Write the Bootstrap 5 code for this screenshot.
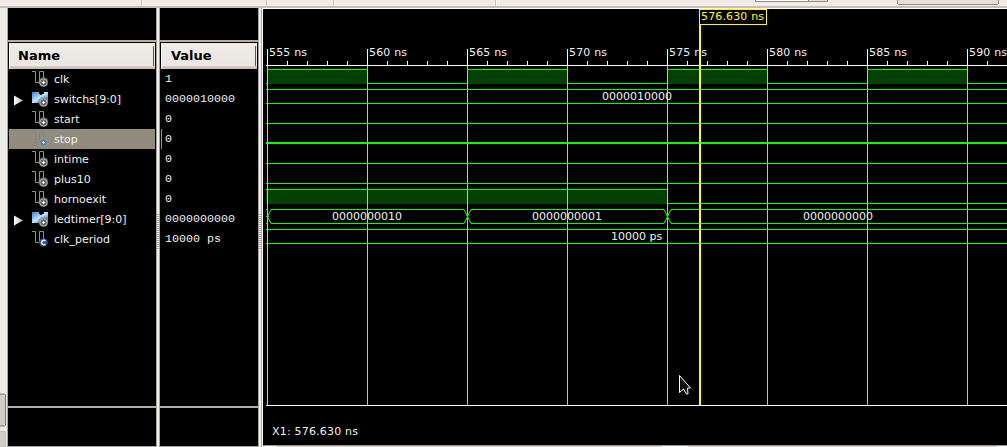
<!DOCTYPE html>
<html lang="en">
<head>
<meta charset="utf-8">
<title>Waveform viewer</title>
<link href="https://cdn.jsdelivr.net/npm/bootstrap@5.3.0/dist/css/bootstrap.min.css" rel="stylesheet">
<style>
body{width:1007px;height:447px;overflow:hidden;background:#efebe6;font:11px/20px "DejaVu Sans",sans-serif;color:#f0f0f0}
.toolbar-strip{height:8px;border-bottom:2px solid #c4bfb8;flex:none}
.left-edge{width:7px}
.pane{background:#000;border:1px solid #a8a49e;border-top:0;height:439px}
.pane-top{height:34px;border-bottom:2px solid #b3afa8}
.pane-head{height:26px;margin:1px 1px 0;background:linear-gradient(#efebe6 0,#eae6e1 88%,#c9c0b8 92%,#c9c0b8 100%);color:#000;font:bold 13px/25px "DejaVu Sans",sans-serif;padding-left:9px;border-left:1px solid #fff}
.names .pane-head{padding-left:8px}
.pane-head:after{content:"";width:1px;height:20px;background:#555;margin:3px 1px 0 auto}
.sig{height:20px;margin:0 1px;white-space:pre;line-height:22px}
.sig-arrow{width:23px;height:20px;flex:none}
.sig-icon{width:16px;height:16px;margin:2px 6px 0 0;flex:none;fill:none}
.sig-on{background:#918c7d}
.sig-on .sig-icon{opacity:.75}
.sig-list{height:337px}
.pane-foot{border-top:2px solid #b3afa8;height:39px}
.vals .sig{font:11.67px/21px "Liberation Mono",monospace;padding-left:4px}
.vals .sig-on{background:linear-gradient(90deg,#918c7d 1px,transparent 1px)}
.splitter{width:2px;background:#f3f0ec}
.grip{height:36px;margin-top:206px;background:repeating-linear-gradient(#aaa69f 0 1px,#fff 1px 2px)}
</style>
</head>
<body class="d-flex flex-column">
<div class="toolbar-strip"><svg class="d-block" width="1007" height="6" shape-rendering="crispEdges"><path d="M141.5 0V6M266.5 0V6M333.5 0V6M495.5 0V6" stroke="#c4bfb8"/><path d="M142.5 0V6M267.5 0V6M334.5 0V6M496.5 0V6" stroke="#fff"/><path d="M755.500 0V1.500H808.500V0" fill="#fff" stroke="#8e8a84"/><path d="M808.500 0V1.500H827.500V0" fill="#e5dfd9" stroke="#8e8a84"/><path d="M897.500 0V3.500L898.500 4.500H997.500L998.500 3.500V0" fill="#e5dfd9" stroke="#8e8a84"/></svg></div>
<main class="d-flex">
<div class="left-edge"><svg class="d-block" width="7" height="439"><path d="M0 386H4.500L5.500 387V417L4.500 418H0" fill="#d2cdc7" stroke="#77736e"/><path d="M0 423.500H5.500V439H0" fill="#d2cdc7" stroke="#c0bbb5"/></svg></div>
<section class="pane names" style="width:150px">
<div class="pane-top"></div>
<div class="pane-head d-flex">Name</div>
<div class="sig-list">
<div class="sig d-flex"><span class="sig-arrow"></span><svg class="sig-icon"><use href="#bit"/></svg>clk</div>
<div class="sig d-flex"><svg class="sig-arrow"><use href="#tri"/></svg><svg class="sig-icon"><use href="#bus"/></svg>switchs[9:0]</div>
<div class="sig d-flex"><span class="sig-arrow"></span><svg class="sig-icon"><use href="#bit"/></svg>start</div>
<div class="sig sig-on d-flex"><span class="sig-arrow"></span><svg class="sig-icon"><use href="#bitsel"/></svg>stop</div>
<div class="sig d-flex"><span class="sig-arrow"></span><svg class="sig-icon"><use href="#bit"/></svg>intime</div>
<div class="sig d-flex"><span class="sig-arrow"></span><svg class="sig-icon"><use href="#bit"/></svg>plus10</div>
<div class="sig d-flex"><span class="sig-arrow"></span><svg class="sig-icon"><use href="#bit"/></svg>hornoexit</div>
<div class="sig d-flex"><svg class="sig-arrow"><use href="#tri"/></svg><svg class="sig-icon"><use href="#bus"/></svg>ledtimer[9:0]</div>
<div class="sig d-flex"><span class="sig-arrow"></span><svg class="sig-icon"><use href="#const"/></svg>clk_period</div>
</div>
<div class="pane-foot"></div>
</section>
<div class="splitter"><div class="grip"></div></div>
<section class="pane vals" style="width:100px">
<div class="pane-top"></div>
<div class="pane-head d-flex">Value</div>
<div class="sig-list">
<div class="sig">1</div>
<div class="sig">0000010000</div>
<div class="sig">0</div>
<div class="sig sig-on">0</div>
<div class="sig">0</div>
<div class="sig">0</div>
<div class="sig">0</div>
<div class="sig">0000000000</div>
<div class="sig">10000 ps</div>
</div>
<div class="pane-foot"></div>
</section>
<div class="splitter"><div class="grip"></div></div>
<svg class="d-block" width="746" height="439" viewBox="261 8 746 439" shape-rendering="crispEdges" fill="none">
<defs>
<linearGradient id="blue" x2="1" y2="1"><stop stop-color="#2f87cf"/><stop offset=".5" stop-color="#c4e5fa"/><stop offset=".75" stop-color="#3b9be0"/></linearGradient>
<radialGradient id="halo"><stop offset=".5" stop-color="#777"/><stop offset="1" stop-color="#777" stop-opacity="0"/></radialGradient>
<g id="knob" shape-rendering="auto"><circle cx="11.500" cy="11" r="6" fill="url(#halo)"/><circle cx="11.500" cy="11.500" r="3.700" fill="#666" stroke="#b4b4b4"/><path d="M10 11.500h3M11.500 10v3" stroke="#fff"/></g>
<path id="pulse" d="M0 .5H3.500V11.500H7.500V.5H11.500V9" stroke="#79a36b" fill="none"/>
<g id="bit"><use href="#pulse"/><use href="#knob"/></g>
<g id="bitsel"><path d="M0 .5H3.500V11.500H7.500V.5H11.500V9" stroke="#5a9484" fill="none"/><circle cx="11.500" cy="11.500" r="4" fill="#58799b" stroke="#86a5c0" shape-rendering="auto"/><path d="M10 11.500h3M11.500 10v3" stroke="#d5efff"/></g>
<g id="bus"><path d="M0 1H7V3H8V4H10V3H12V1H16V12H0Z" fill="url(#blue)"/><use href="#knob"/></g>
<g id="const"><use href="#pulse"/><circle cx="11.500" cy="11.500" r="4.300" fill="#244e9c" shape-rendering="auto"/><path d="M13.400 10.100A2.200 2.200 0 1 0 13.400 12.900" stroke="#fff" fill="none" stroke-width="1.400" shape-rendering="auto"/></g>
<linearGradient id="trig"><stop stop-color="#fff"/><stop offset="1" stop-color="#b5b1ab"/></linearGradient>
<path id="tri" d="M5 6.500L14 11.500L5 16.500Z" fill="url(#trig)" shape-rendering="auto"/>
</defs>
<path d="M261.500 8V447M261 8.500H1007" stroke="#aaa69f"/>
<path d="M262.500 9V447M262 8.500H1007" stroke="#fff"/>
<path d="M263 9H1007V445H263Z" fill="#000"/>
<path d="M263 445.500H1007" stroke="#9b948d"/><path d="M263 446.500H1007" stroke="#d8d0ca"/><path d="M265 446.500H277M662 446.500H688M997 446.500H1007" stroke="#fff"/>
<path d="M267 70H367V84H267ZM467 70H567V84H467ZM667 70H767V84H667ZM867 70H967V84H867ZM266 190H667V204H266Z" fill="#004000"/>
<path stroke="#00ff00" d="M267 69.500H367M367 83.500H467M467 69.500H567M567 83.500H667M667 69.500H767M767 83.500H867M867 69.500H967M967 83.500H1007M266 83.500h1M266 89.500H1007M266 103.500H1007M266 123.500H1007M266 163.500H1007M266 183.500H1007M266 189.500H667M667 203.500H1007M266 229.500H1007M266 243.500H1007M266 209.500h1M266 223.500h1M271 209.500H464M271 223.500H464M471 209.500H664M471 223.500H664M671 209.500H1007M671 223.500H1007"/>
<path d="M266 143H1007" stroke="#00ff00" stroke-width="2"/>
<path d="M267.500 66V405M367.500 66V405M467.500 66V405M567.500 66V405M667.500 66V405M767.500 66V405M867.500 66V405M967.500 66V405" stroke="#c0c0c0"/>
<path stroke="#00ff00" shape-rendering="auto" d="M267.500 216.500L271 209.500M267.500 216.500L271 223.500M464 209.500L471 223.500M464 223.500L471 209.500M664 209.500L671 223.500M664 223.500L671 209.500M266 216.500h3"/>
<path d="M266 65.500H1007M266 405.500H1007M267.500 49V65M367.500 49V65M467.500 49V65M567.500 49V65M667.500 49V65M767.500 49V65M867.500 49V65M967.500 49V65" stroke="#fff"/>
<path d="M287.500 61V65M307.500 61V65M327.500 61V65M347.500 61V65M387.500 61V65M407.500 61V65M427.500 61V65M447.500 61V65M487.500 61V65M507.500 61V65M527.500 61V65M547.500 61V65M587.500 61V65M607.500 61V65M627.500 61V65M647.500 61V65M687.500 61V65M707.500 61V65M727.500 61V65M747.500 61V65M787.500 61V65M807.500 61V65M827.500 61V65M847.500 61V65M887.500 61V65M907.500 61V65M927.500 61V65M947.500 61V65M987.500 61V65" stroke="#fff"/>
<g fill="#f0f0f0" font-size="11">
<text x="269" y="56" textLength="38">555 ns</text><text x="369" y="56" textLength="38">560 ns</text><text x="469" y="56" textLength="38">565 ns</text><text x="569" y="56" textLength="38">570 ns</text><text x="669" y="56" textLength="38">575 ns</text><text x="769" y="56" textLength="38">580 ns</text><text x="869" y="56" textLength="38">585 ns</text><text x="969" y="56" textLength="38">590 ns</text>
<text x="602" y="100">0000010000</text><text x="332" y="220">0000000010</text><text x="532" y="220">0000000001</text><text x="803" y="220">0000000000</text><text x="611" y="240">10000 ps</text><text x="272" y="435" textLength="86">X1: 576.630 ns</text>
</g>
<path d="M700 10V405" stroke="#ff0" stroke-width="2"/>
<path d="M699.500 9.500H766.500V24.500H699.500Z" fill="#000" stroke="#ff0"/>
<text x="701" y="20" font-size="11" fill="#ff0" textLength="63">576.630 ns</text>
<path d="M679.500 375.500V392.500L683.500 389L686.500 394H688L687.500 388H690.500Z" fill="#111" stroke="#fff" shape-rendering="auto"/>
</svg>
</main>
<script src="https://cdn.jsdelivr.net/npm/bootstrap@5.3.0/dist/js/bootstrap.bundle.min.js"></script>
</body>
</html>
